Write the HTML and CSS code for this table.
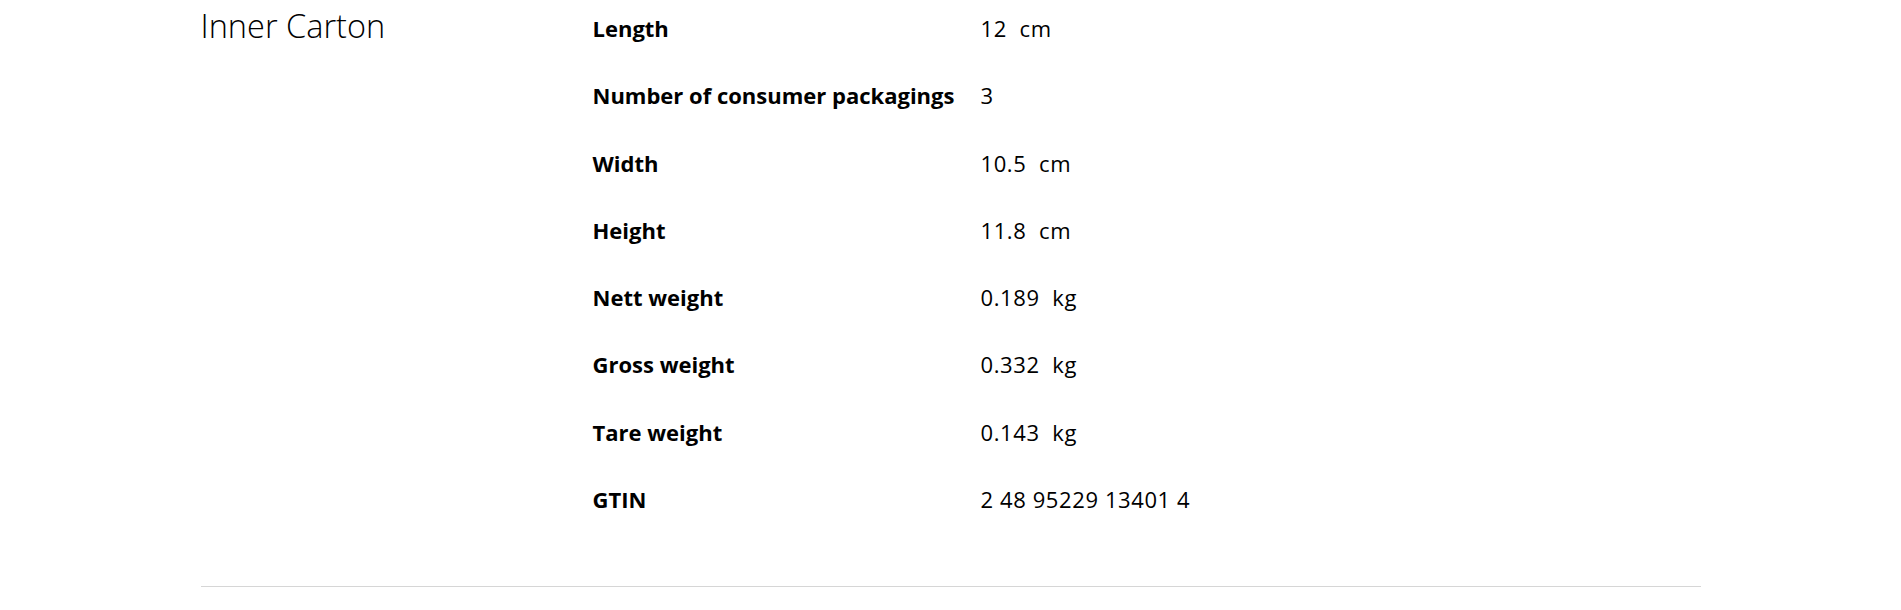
FILE: index.html
```html
<!DOCTYPE html>
<html lang="en">
<head>
<meta charset="utf-8">
<title>Inner Carton</title>
<link rel="stylesheet" href="styles.css">
</head>
<body>
<section class="spec">
  <h2 class="spec-title">Inner Carton</h2>
  <dl class="spec-list">
    <div class="spec-row"><dt>Length</dt><dd>12&nbsp; cm</dd></div>
    <div class="spec-row"><dt>Number of consumer packagings</dt><dd>3</dd></div>
    <div class="spec-row"><dt>Width</dt><dd>10.5&nbsp; cm</dd></div>
    <div class="spec-row"><dt>Height</dt><dd>11.8&nbsp; cm</dd></div>
    <div class="spec-row"><dt>Nett weight</dt><dd>0.189&nbsp; kg</dd></div>
    <div class="spec-row"><dt>Gross weight</dt><dd>0.332&nbsp; kg</dd></div>
    <div class="spec-row"><dt>Tare weight</dt><dd>0.143&nbsp; kg</dd></div>
    <div class="spec-row"><dt>GTIN</dt><dd>2 48 95229 13401 4</dd></div>
  </dl>
</section>
</body>
</html>
```

FILE: styles.css
```css
html, body {
  margin: 0;
  padding: 0;
  background: #fff;
}

body {
  font-family: "Open Sans", "Noto Sans", sans-serif;
  color: #000;
}

.spec {
  max-width: 1500px;
  margin: 0 auto;
  display: grid;
  grid-template-columns: 392px 1fr;
  padding-bottom: 48px;
  border-bottom: 1px solid #d6d6d6;
}

.spec-title {
  margin: 6px 0 0;
  font-size: 32.5px;
  line-height: 40px;
  font-weight: 300;
}

.spec-list {
  margin: 0;
  padding: 0;
}

.spec-row {
  display: grid;
  grid-template-columns: 388px 1fr;
  padding: 12px 0 22px;
  font-size: 22px;
  line-height: 33.3px;
}

.spec-row dt {
  font-weight: 700;
  white-space: nowrap;
}

.spec-row dd {
  margin: 0;
  font-weight: 400;
  letter-spacing: 0.6px;
}
```
